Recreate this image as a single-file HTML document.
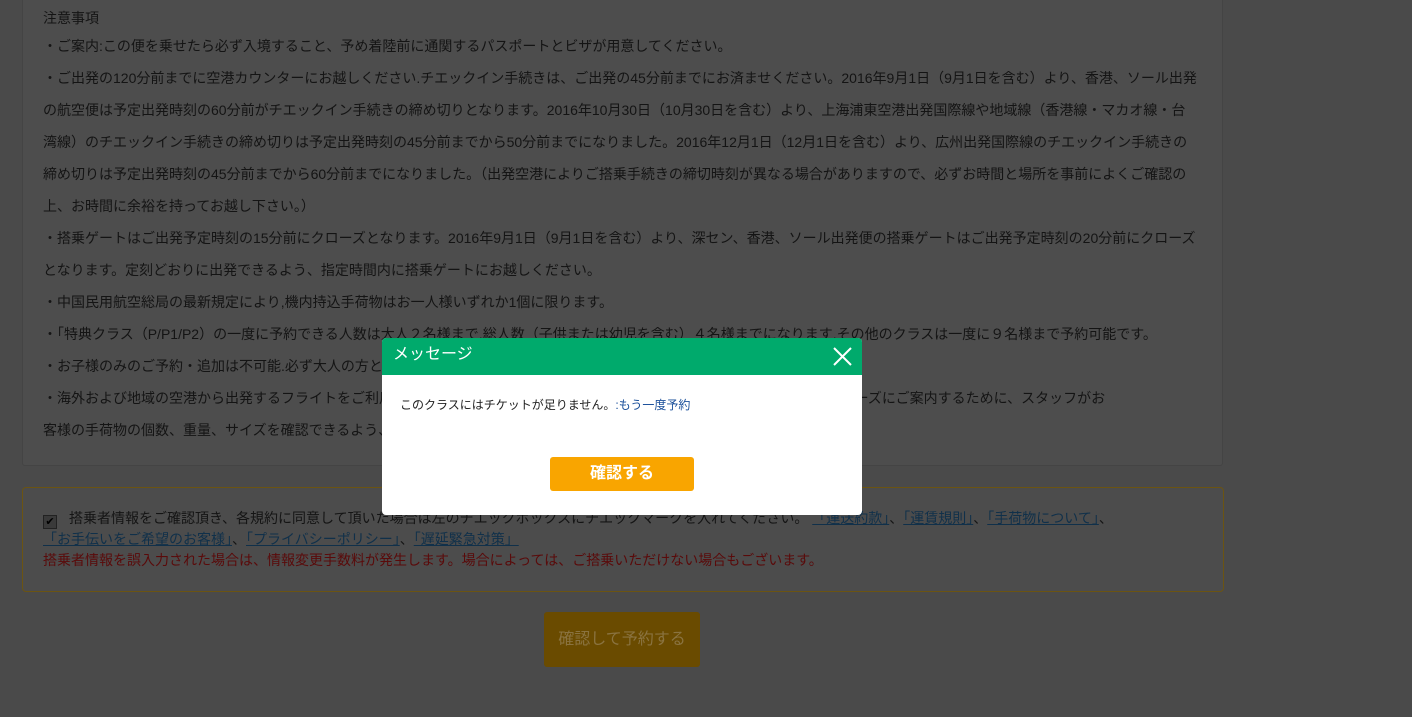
<!DOCTYPE html>
<html><head><meta charset="utf-8"><style>
body{margin:0;width:1412px;height:717px;background:#4a4a4a;font-family:"Liberation Sans","Noto Sans CJK JP",sans-serif;overflow:hidden;position:relative;color:#141414}
.card{position:absolute;left:22px;top:-10px;width:1199px;height:474px;background:#4d4d4d;border:1px solid #444;border-radius:3px}
.txt{position:absolute;left:43px;top:30px;font-size:14px;line-height:32px;white-space:nowrap}
.ttl{position:absolute;left:43px;top:8px;font-size:14px;line-height:20px}
.box{position:absolute;left:22px;top:487px;width:1200px;height:103px;border:1px solid #6b5412;border-radius:4px;background:#4c4c4c}
.b1{position:absolute;left:20px;top:20px;font-size:14px;line-height:21px;width:1160px}
a{color:#10304a;text-decoration:underline}
.red{color:#5a0a0a}
.cb{display:inline-block;width:12px;height:12px;background:#3a3a3a;border:1px solid #222;vertical-align:-2px;margin-right:12px;font-size:11px;line-height:12px;text-align:center;color:#000}
.btn{position:absolute;left:544px;top:612px;width:156px;height:55px;background:#6a4b00;border-radius:3px;color:#8a7340;font-size:16px;line-height:55px;text-align:center}
.dlg{position:absolute;left:382px;top:338px;width:480px;height:177px;background:#fff;border-radius:4px;overflow:hidden}
.hd{height:37px;background:#00aa6c;color:#fff;font-size:16px;line-height:34px;padding-left:11px;position:relative}
.msg{position:absolute;left:18px;top:58px;font-size:12px;color:#222}
.msg span{color:#1a4f9a}
.ok{position:absolute;left:168px;top:119px;width:144px;height:34px;background:#f9a500;border-radius:3px;color:#fff;font-size:16px;font-weight:bold;line-height:34px;text-align:center}
</style></head><body>
<div class="card"></div>
<div class="ttl">注意事項</div>
<div class="txt">・ご案内:この便を乗せたら必ず入境すること、予め着陸前に通関するパスポートとビザが用意してください。<br>
・ご出発の120分前までに空港カウンターにお越しください.チエックイン手続きは、ご出発の45分前までにお済ませください。2016年9月1日（9月1日を含む）より、香港、ソール出発<br>の航空便は予定出発時刻の60分前がチエックイン手続きの締め切りとなります。2016年10月30日（10月30日を含む）より、上海浦東空港出発国際線や地域線（香港線・マカオ線・台<br>湾線）のチエックイン手続きの締め切りは予定出発時刻の45分前までから50分前までになりました。2016年12月1日（12月1日を含む）より、広州出発国際線のチエックイン手続きの<br>締め切りは予定出発時刻の45分前までから60分前までになりました。（出発空港によりご搭乗手続きの締切時刻が異なる場合がありますので、必ずお時間と場所を事前によくご確認の<br>上、お時間に余裕を持ってお越し下さい。）<br>
・搭乗ゲートはご出発予定時刻の15分前にクローズとなります。2016年9月1日（9月1日を含む）より、深セン、香港、ソール出発便の搭乗ゲートはご出発予定時刻の20分前にクローズ<br>となります。定刻どおりに出発できるよう、指定時間内に搭乗ゲートにお越しください。<br>
・中国民用航空総局の最新規定により,機内持込手荷物はお一人様いずれか1個に限ります。<br>
・「特典クラス（P/P1/P2）の一度に予約できる人数は大人２名様まで,総人数（子供または幼児を含む）４名様までになります.その他のクラスは一度に９名様まで予約可能です。<br>
・お子様のみのご予約・追加は不可能.必ず大人の方と一緒にご予約ください。<br>
・海外および地域の空港から出発するフライトをご利用のお客様へ：安全で快適な空の旅のために、お客様の手荷物を機内へスムーズにご案内するために、スタッフがお<br>客様の手荷物の個数、重量、サイズを確認できるよう、ご協力をお願いいたします。</div>
<div class="box"><div class="b1"><span class="cb">✔</span>搭乗者情報をご確認頂き、各規約に同意して頂いた場合は左のチエックボックスにチエックマークを入れてください。 <a>「運送約款」</a>、<a>「運賃規則」</a>、<a>「手荷物について」</a>、<br><a>「お手伝いをご希望のお客様」</a>、<a>「プライバシーポリシー」</a>、<a>「遅延緊急対策」</a><br><span class="red">搭乗者情報を誤入力された場合は、情報変更手数料が発生します。場合によっては、ご搭乗いただけない場合もございます。</span></div></div>
<div class="btn">確認して予約する</div>
<div class="dlg"><div class="hd">メッセージ<svg style="position:absolute;right:10px;top:9px" width="19" height="19"><path d="M1 1L18 18M18 1L1 18" stroke="#fff" stroke-width="2"/></svg></div>
<div class="msg">このクラスにはチケットが足りません。<span>:もう一度予約</span></div>
<div class="ok">確認する</div></div>
</body></html>
